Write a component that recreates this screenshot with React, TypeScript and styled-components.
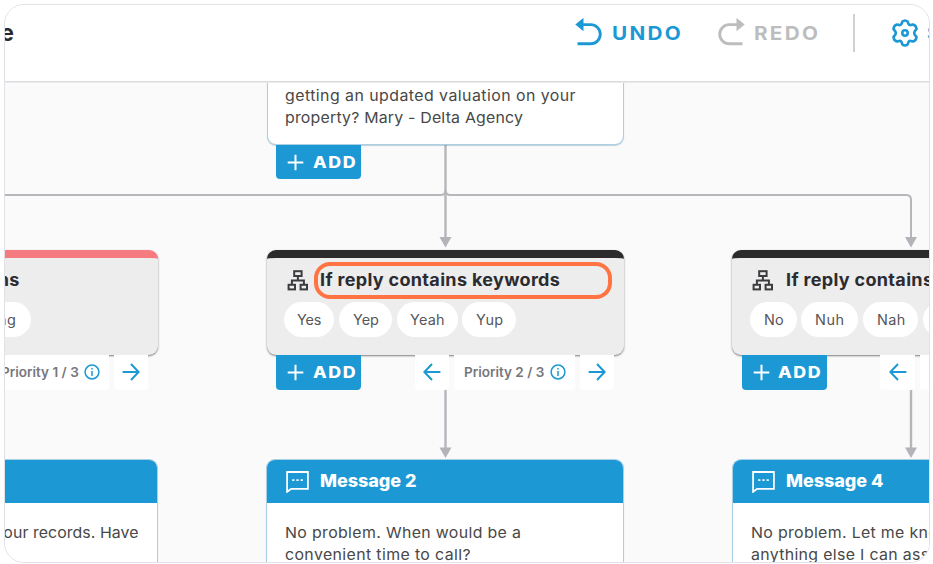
import React from "react";
import styled, { createGlobalStyle } from "styled-components";

const BLUE = "#1c99d5";

const GlobalStyle = createGlobalStyle`
  * { box-sizing: border-box; }
  body {
    margin: 0;
    background: #fff;
    font-family: Inter, "Open Sans", sans-serif;
    color: #444;
  }
`;

const Page = styled.div`
  width: 933px;
  height: 564px;
  padding: 4px 3px 1px 4px;
`;

const Frame = styled.main`
  display: flex;
  flex-direction: column;
  width: 100%;
  height: 100%;
  border: 1px solid #e1e1e8;
  border-radius: 20px;
  overflow: hidden;
  background: #fafafa;
`;

const Header = styled.header`
  display: flex;
  flex: none;
  height: 77px;
  border-bottom: 1px solid #d9dadb;
  box-shadow: 0 1px 0 #ececec;
  background: #fff;
  position: relative;
  z-index: 2;
`;

const PageTitle = styled.div`
  width: 9px;
  margin-top: 13.5px;
  display: flex;
  justify-content: flex-end;
  font-size: 22.5px;
  line-height: 28px;
  font-weight: 700;
  color: #2a2a2e;
`;

const Toolbar = styled.div`
  display: flex;
  align-items: center;
  height: 40px;
  margin: 8px 0 0 561px;
  white-space: nowrap;
`;

const ToolButton = styled.div<{ $color: string; $gap: number; $width: number }>`
  display: flex;
  flex: none;
  align-items: center;
  gap: ${(p) => p.$gap}px;
  width: ${(p) => p.$width}px;
  color: ${(p) => p.$color};
  font-size: 18.5px;
  font-weight: 700;

  svg { flex: none; }
`;

const Divider = styled.div`
  flex: none;
  width: 2.5px;
  height: 38px;
  margin-right: 35.5px;
  background: #d0d0d0;
`;

const Text = styled.span<{ $track?: number; $stretch?: number; $end?: boolean }>`
  display: block;
  white-space: nowrap;
  letter-spacing: ${(p) => p.$track ?? 0.3}px;
  transform: scaleX(${(p) => p.$stretch ?? 1.06});
  transform-origin: ${(p) => (p.$end ? "right" : "left")} center;
`;

const Canvas = styled.section`
  position: relative;
  flex: 1;
  overflow: hidden;
`;

const Links = styled.svg`
  position: absolute;
  left: 0;
  top: 0;
`;

const Node = styled.article<{ $x: number; $y: number }>`
  position: absolute;
  left: ${(p) => p.$x}px;
  top: ${(p) => p.$y}px;
  width: 357.5px;
`;

const MessageCard = styled.div<{ $height: number }>`
  height: ${(p) => p.$height}px;
  border: 1px solid #a9d0e4;
  border-radius: 9px;
  background: #fff;
  box-shadow: 0 1px 1px rgba(60, 110, 140, 0.3);
  overflow: hidden;
`;

const MessageHead = styled.div`
  display: flex;
  align-items: center;
  gap: 11px;
  height: 44px;
  margin: -1px -1px 0;
  padding-left: 20px;
  background: ${BLUE};
  color: #fff;
  font-size: 17px;
  line-height: 22px;
  font-weight: 800;
`;

const MessageBody = styled.div<{ $top: number; $end?: boolean }>`
  display: flex;
  flex-direction: column;
  align-items: ${(p) => (p.$end ? "flex-end" : "flex-start")};
  padding: ${(p) => p.$top}px 18px 0 17.5px;
  font-size: 15px;
  line-height: 22px;
  color: #484848;
`;

const ConditionCard = styled.div<{ $accent: string }>`
  height: 105.5px;
  border-radius: 9px;
  border-top: 8.5px solid ${(p) => p.$accent};
  background: #ededed;
  box-shadow: 0 1px 2px rgba(0, 0, 0, 0.5);
`;

const ConditionHead = styled.div`
  display: flex;
  align-items: center;
  height: 44px;
  padding: 1px 0 0 20px;
  gap: 11.5px;
  color: #2c2c30;
  font-size: 17px;
  font-weight: 700;
  position: relative;

  svg { flex: none; }
`;

const EndTitle = styled.div`
  flex: 1;
  display: flex;
  justify-content: flex-end;
  margin-right: 138px;
`;

const Highlight = styled.div`
  position: absolute;
  left: 47.5px;
  top: 4px;
  width: 298px;
  height: 37px;
  border: 4px solid #ff7442;
  border-radius: 16px;
`;

const Chips = styled.div<{ $end?: boolean }>`
  display: flex;
  gap: 4.5px;
  padding: 0 17.5px;
  margin-right: ${(p) => (p.$end ? "110px" : "0")};
  justify-content: ${(p) => (p.$end ? "flex-end" : "flex-start")};
`;

const Chip = styled.div<{ $width: number }>`
  display: flex;
  flex: none;
  align-items: center;
  justify-content: center;
  width: ${(p) => p.$width}px;
  height: 35px;
  border-radius: 18px;
  background: #fff;
  font-size: 14px;
  color: #55555a;
`;

const Footer = styled.div`
  display: flex;
  position: relative;
  height: 34.5px;
  padding-left: 9.5px;
`;

const AddButton = styled.div`
  display: flex;
  align-items: center;
  gap: 8.5px;
  width: 85px;
  padding: 1px 0 0 11px;
  border-radius: 0 0 4px 4px;
  background: ${BLUE};
  color: #fff;
  font-size: 15.5px;
  font-weight: 800;

  svg { flex: none; }
`;

const PriorityNav = styled.div`
  display: flex;
  gap: 5px;
  margin-left: 53.5px;
`;

const NavCell = styled.div<{ $width: number; $label?: boolean }>`
  display: flex;
  align-items: center;
  justify-content: ${(p) => (p.$label ? "flex-end" : "center")};
  gap: 5px;
  width: ${(p) => p.$width}px;
  padding-right: ${(p) => (p.$label ? "9px" : "0")};
  border-radius: 0 0 4px 4px;
  background: #fff;
  font-size: 13px;
  font-weight: 600;
  color: #77777b;
`;

const UndoIcon = ({ flip = false }: { flip?: boolean }) => (
  <svg width="28" height="30" viewBox="0 0 28 30">
    <g transform={flip ? "translate(27.5 -1) scale(-1 1)" : "translate(-0.5 -1)"}>
      <path d="M7 7.6H16.2A9.6 9.6 0 0 1 16.2 26.8H3" fill="none" stroke="currentColor" strokeWidth="2.9" />
      <path d="M0.8 7.6L9 0.9V14.3Z" fill="currentColor" />
    </g>
  </svg>
);

const GearIcon = () => (
  <svg width="28" height="30" viewBox="0 0 28 30" fill="none" stroke="currentColor" strokeWidth="2.6" strokeLinejoin="round">
    <path d="M11.2 3.8Q14 1.2 16.8 3.8L17.5 6.1Q18 7.3 19.5 7.1L22 6.5Q25.4 7.3 25.5 11.2L23.8 13.2Q22.7 15 23.8 16.8L25.5 18.8Q25.4 22.7 22 23.5L19.5 22.9Q18 22.7 17.5 23.9L16.8 26.2Q14 28.8 11.2 26.2L10.5 23.9Q10 22.7 8.5 22.9L6 23.5Q2.6 22.7 2.5 18.8L4.2 16.8Q5.3 15 4.2 13.2L2.5 11.2Q2.6 7.3 6 6.5L8.5 7.1Q10 7.3 10.5 6.1Z" />
    <circle cx="14" cy="15" r="2.7" />
  </svg>
);

const PlusIcon = () => (
  <svg width="17" height="17" viewBox="0 0 17 17" stroke="#fff" strokeWidth="2">
    <path d="M8.5 0.7V16.3M0.7 8.5H16.3" />
  </svg>
);

const TreeIcon = () => (
  <svg width="22" height="21" viewBox="0 0 22 21" fill="none" stroke="#3c3c40" strokeWidth="2">
    <rect x="7.2" y="1.2" width="7.4" height="4.8" />
    <rect x="1.6" y="14.8" width="6.4" height="4.6" />
    <rect x="13.6" y="14.8" width="6.4" height="4.6" />
    <path d="M10.9 6V10.3M4.9 14.8V10.5H16.9V14.8" />
  </svg>
);

const ChatIcon = () => (
  <svg width="23" height="23" viewBox="0 0 23 23" fill="none" stroke="#fff" strokeWidth="1.8">
    <path d="M1.1 2H21.9V18.8H5.2L1.1 21.8Z" />
    <path d="M6.2 10.1H8.4M10.4 10.1H12.6M14.6 10.1H16.8" strokeWidth="1.9" />
  </svg>
);

const ArrowIcon = ({ back = false }: { back?: boolean }) => (
  <svg width="18" height="18" viewBox="0 0 18 18" fill="none" stroke={BLUE} strokeWidth="2">
    <path d={back ? "M9 1L1.4 9L9 17M1.4 9H17.4" : "M9 1L16.6 9L9 17M16.6 9H0.6"} />
  </svg>
);

const InfoIcon = () => (
  <svg width="16" height="16" viewBox="0 0 16 16" fill="none" stroke={BLUE} strokeWidth="1.5">
    <circle cx="8" cy="8" r="6.9" />
    <path d="M8 7V12M8 4V5.6" />
  </svg>
);

const Add = () => (
  <AddButton>
    <PlusIcon />
    <Text $track={1.4} $stretch={1.15}>ADD</Text>
  </AddButton>
);

type ConditionProps = {
  x: number;
  accent: string;
  title: string;
  chips: [string, number, number][];
  priority: number;
  highlighted?: boolean;
  end?: boolean;
};

const Condition = ({ x, accent, title, chips, priority, highlighted, end }: ConditionProps) => (
  <Node $x={x} $y={167.5}>
    <ConditionCard $accent={accent}>
      <ConditionHead>
        <TreeIcon />
        {end ? <EndTitle><Text $end>{title}</Text></EndTitle> : <Text>{title}</Text>}
        {highlighted && <Highlight />}
      </ConditionHead>
      <Chips $end={end}>
        {chips.map(([label, width, track]) => (
          <Chip key={label} $width={width}>
            <Text $track={track} $stretch={1.03}>{label}</Text>
          </Chip>
        ))}
      </Chips>
    </ConditionCard>
    <Footer>
      <Add />
      <PriorityNav>
        <NavCell $width={34.5}><ArrowIcon back /></NavCell>
        <NavCell $width={120.5} $label>
          <Text $track={0} $stretch={1.04} $end>Priority {priority} / 3</Text>
          <InfoIcon />
        </NavCell>
        <NavCell $width={34.5}><ArrowIcon /></NavCell>
      </PriorityNav>
    </Footer>
  </Node>
);

type MessageProps = { x: number; title?: string; lines: [string, number][]; end?: boolean };

const Message = ({ x, title, lines, end }: MessageProps) => (
  <Node $x={x} $y={377}>
    <MessageCard $height={160}>
      <MessageHead>
        {title && <ChatIcon />}
        {title && <Text $track={-0.05}>{title}</Text>}
      </MessageHead>
      <MessageBody $top={18.5} $end={end}>
        {lines.map(([line, track]) => (
          <Text key={line} $track={track} $end={end}>{line}</Text>
        ))}
      </MessageBody>
    </MessageCard>
  </Node>
);

export default function App() {
  return (
    <Page>
      <GlobalStyle />
      <Frame>
        <Header>
          <PageTitle>e</PageTitle>
          <Toolbar>
            <ToolButton $color={BLUE} $gap={9} $width={143}>
              <UndoIcon />
              <Text $track={2} $stretch={1.12}>UNDO</Text>
            </ToolButton>
            <ToolButton $color="#bdbdbd" $gap={8} $width={134.5}>
              <UndoIcon flip />
              <Text $track={2} $stretch={1.12}>REDO</Text>
            </ToolButton>
            <Divider />
            <ToolButton $color={BLUE} $gap={8} $width={90}>
              <GearIcon />
              <Text>S</Text>
            </ToolButton>
          </Toolbar>
        </Header>
        <Canvas>
          <Links width="926" height="482" viewBox="0 0 926 482" fill="none" stroke="#b6b6bb" strokeWidth="2">
            <path d="M440.5 62V157" strokeWidth="2.4" />
            <path d="M0 113H435.5Q440.5 113 440.5 108Q440.5 113 445.5 113H901.5Q906 113 906 118V157" />
            <path d="M440.5 300V368M906 300V368" strokeWidth="2.4" />
            <g fill="#b3b3b9" stroke="none">
              <path d="M434.5 155H446.5L440.5 165.5Z" />
              <path d="M900 155H912L906 165.5Z" />
              <path d="M434.5 365.5H446.5L440.5 376Z" />
              <path d="M900 365.5H912L906 376Z" />
            </g>
          </Links>
          <Node $x={261.5} $y={-60}>
            <MessageCard $height={122.5}>
              <MessageBody $top={61.5}>
                <Text $track={0.42}>getting an updated valuation on your</Text>
                <Text $track={0.18}>property? Mary - Delta Agency</Text>
              </MessageBody>
            </MessageCard>
            <Footer><Add /></Footer>
          </Node>
          <Condition x={-204.5} accent="#f67b80" title="ns" chips={[["ng", 47, 0.5]]} priority={1} end />
          <Condition
            x={261.5}
            accent="#2b2b2b"
            title="If reply contains keywords"
            chips={[["Yes", 50, -0.2], ["Yep", 53.5, 0], ["Yeah", 61, 0.2], ["Yup", 54, 0.3]]}
            priority={2}
            highlighted
          />
          <Condition
            x={727.3}
            accent="#2b2b2b"
            title="If reply contains keywords"
            chips={[["No", 47, 0.1], ["Nuh", 57, 0.5], ["Nah", 55.5, 0.4], ["Nope", 60, 0.3]]}
            priority={3}
          />
          <Message x={-204.5} lines={[["our records. Have", 0.05]]} end />
          <Message x={261.3} title="Message 2" lines={[["No problem. When would be a", 0.32], ["convenient time to call?", 0.35]]} />
          <Message x={727} title="Message 4" lines={[["No problem. Let me know", 0.3], ["anything else I can assist", 0.3]]} />
        </Canvas>
      </Frame>
    </Page>
  );
}
